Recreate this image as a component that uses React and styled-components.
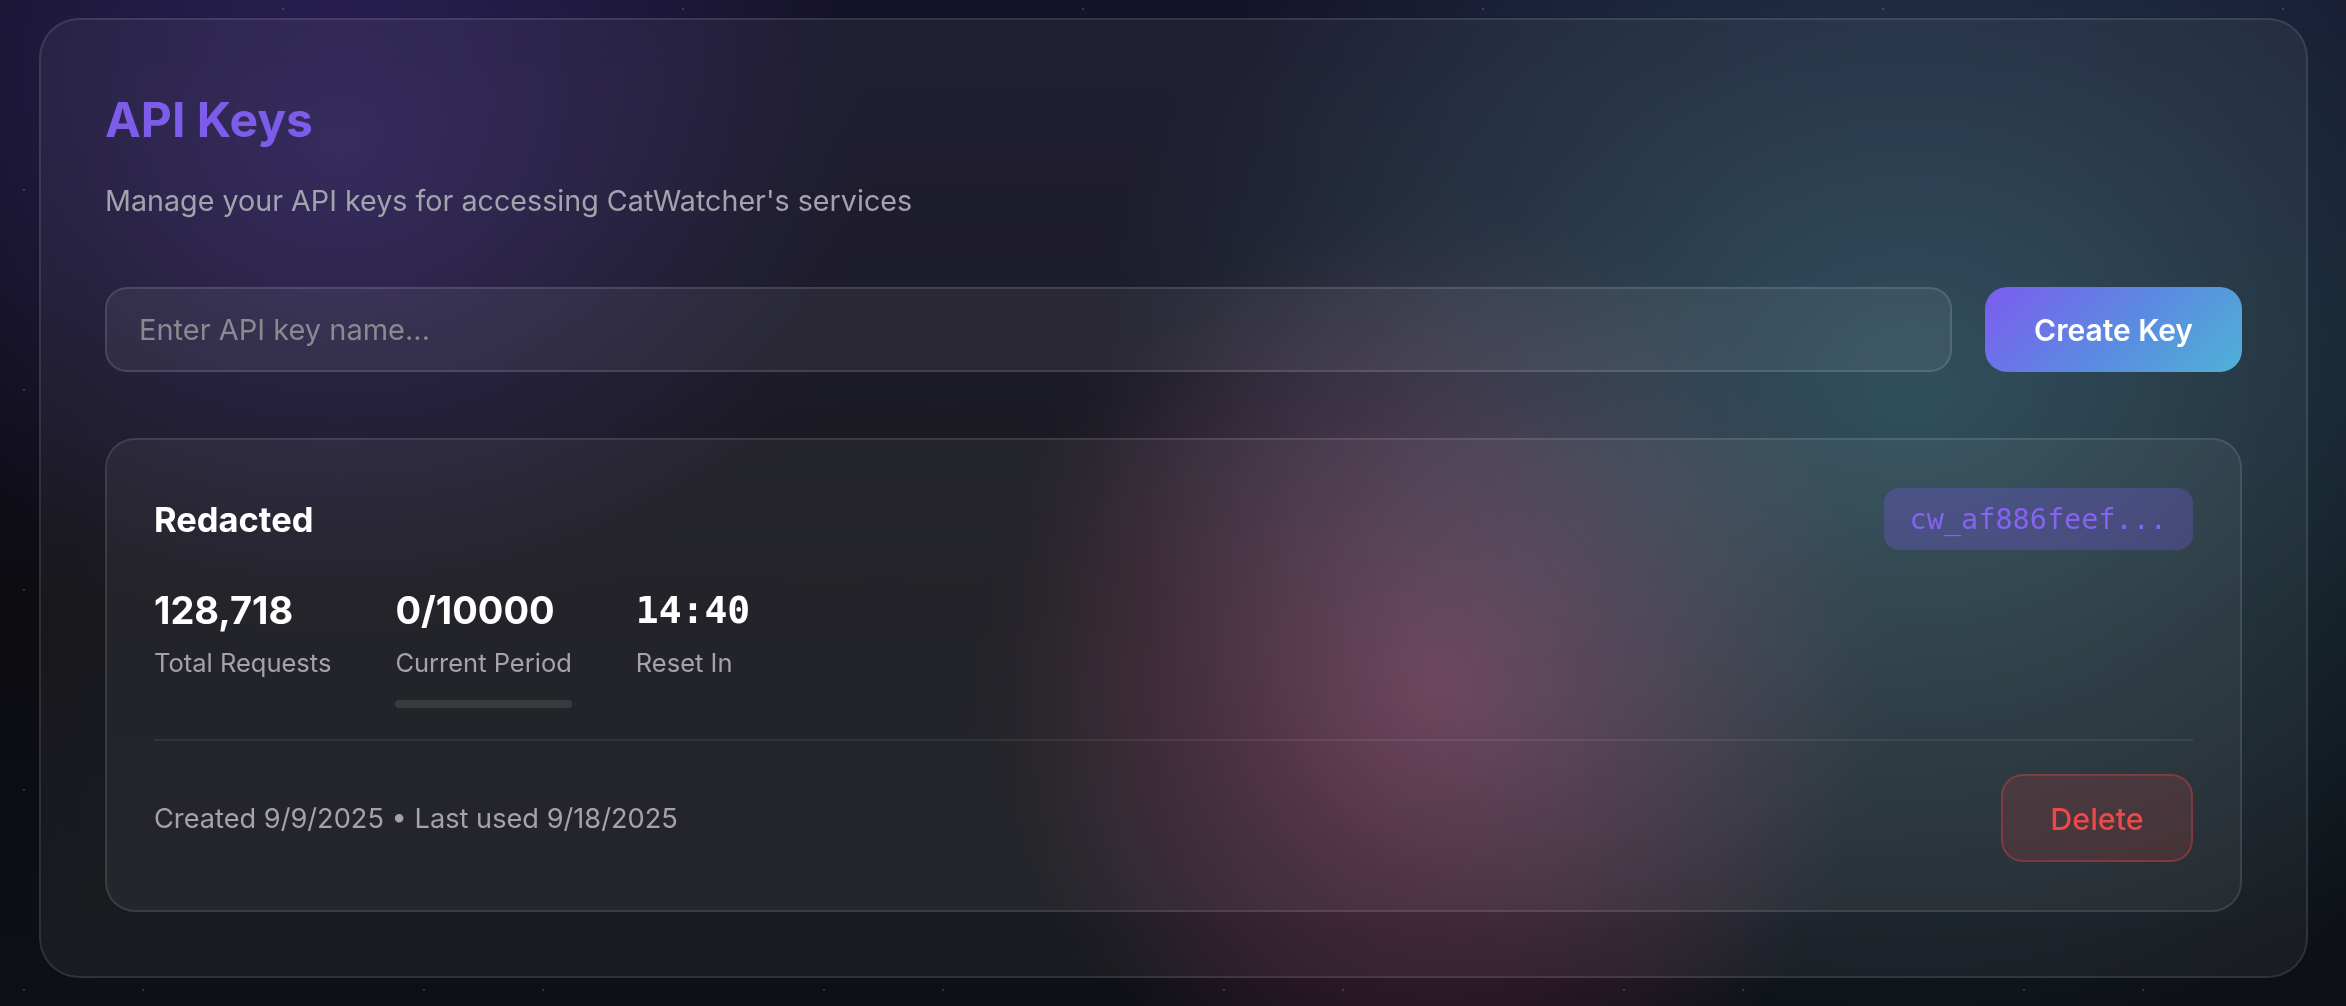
import React from "react";
import styled, { createGlobalStyle } from "styled-components";

const GlobalStyle = createGlobalStyle`
  * { box-sizing: border-box; }
  html, body { margin: 0; padding: 0; }
  body {
    font-family: Inter, "Noto Sans", "Liberation Sans", sans-serif;
    color: #fff;
    min-height: 100vh;
    background-color: #0c0c11;
    background-image:
      radial-gradient(ellipse 520px 480px at 340px 150px, rgba(110, 72, 220, 0.28), transparent 100%),
      radial-gradient(ellipse 820px 660px at 1910px 390px, rgba(70, 150, 170, 0.42), transparent 100%),
      radial-gradient(ellipse 440px 470px at 1440px 680px, rgba(230, 80, 140, 0.4), transparent 100%),
      linear-gradient(180deg, #15132a 0%, #0c0c11 60%, #0d1016 100%);
  }
`;

const Page = styled.div`
  min-height: 100vh;
  padding: 18px 38px 29px 39px;
  background-image:
    radial-gradient(circle 1.6px at 24px 190px, rgba(255, 255, 255, 0.28), transparent 100%),
    radial-gradient(circle 1.6px at 143px 190px, rgba(255, 255, 255, 0.28), transparent 100%),
    radial-gradient(circle 1.6px at 283px 9px, rgba(255, 255, 255, 0.28), transparent 100%);
  background-size: 400px 200px;
`;

const Panel = styled.section`
  border: 2px solid rgba(255, 255, 255, 0.1);
  border-radius: 40px;
  background: rgba(255, 255, 255, 0.05);
  backdrop-filter: blur(24px);
  padding: 64px;
`;

const Title = styled.h1`
  margin: 0;
  font-size: 48px;
  line-height: 72px;
  font-weight: 700;
  color: #7c5ce8;
`;

const Subtitle = styled.p`
  margin: 24px 0 0;
  font-size: 28.7px;
  line-height: 41px;
  color: #a4a3ad;
`;

const CreateRow = styled.div`
  display: flex;
  gap: 33px;
  margin-top: 66px;
`;

const NameInput = styled.input`
  flex: 1;
  height: 85px;
  padding: 0 32px;
  border-radius: 22px;
  border: 2px solid rgba(255, 255, 255, 0.12);
  background: rgba(255, 255, 255, 0.06);
  font-family: inherit;
  font-size: 29px;
  color: #fff;
  outline: none;
  &::placeholder { color: #8a8990; }
`;

const PrimaryButton = styled.button`
  height: 85px;
  padding: 0 49px;
  border: none;
  border-radius: 22px;
  background: linear-gradient(135deg, #7c5cf0 0%, #5a8ce0 55%, #4fb2d6 100%);
  color: #fff;
  font-family: inherit;
  font-size: 30px;
  font-weight: 600;
  cursor: pointer;
`;

const KeyCard = styled.article`
  margin-top: 66px;
  border: 2px solid rgba(255, 255, 255, 0.1);
  border-radius: 30px;
  background: rgba(255, 255, 255, 0.05);
  padding: 48px 47px;
`;

const KeyHeader = styled.div`
  display: flex;
  align-items: center;
  justify-content: space-between;
`;

const KeyName = styled.h3`
  margin: 0;
  font-size: 34.5px;
  font-weight: 700;
  color: #fff;
`;

const KeyBadge = styled.code`
  display: inline-flex;
  align-items: center;
  height: 62px;
  padding: 0 26px;
  border-radius: 15px;
  background: rgba(124, 92, 240, 0.28);
  color: #8663f2;
  font-family: "DejaVu Sans Mono", "Liberation Mono", monospace;
  font-size: 28.5px;
`;

const StatsRow = styled.div`
  display: flex;
  gap: 64px;
  margin-top: 38px;
  padding-bottom: 31px;
`;

const Stat = styled.div`
  display: flex;
  flex-direction: column;
`;

const StatValue = styled.div`
  font-family: ${(p) => (p.$mono ? `"DejaVu Sans Mono", "Liberation Mono", monospace` : "inherit")};
  font-size: 38px;
  line-height: 44px;
  font-weight: 700;
  color: #fff;
`;

const StatLabel = styled.div`
  margin-top: 13px;
  font-size: 25.5px;
  line-height: 36px;
  color: #a4a3ad;
`;

const Track = styled.div`
  margin-top: 19px;
  height: 8px;
  border-radius: 4px;
  background: rgba(255, 255, 255, 0.1);
  overflow: hidden;
`;

const Fill = styled.div`
  height: 100%;
  background: linear-gradient(90deg, #7c5cf0, #4fb2d6);
`;

const Footer = styled.div`
  display: flex;
  align-items: center;
  justify-content: space-between;
  border-top: 2px solid rgba(255, 255, 255, 0.07);
  padding-top: 33px;
`;

const Meta = styled.span`
  font-size: 27.2px;
  color: #a4a3ad;
`;

const DangerButton = styled.button`
  width: 192px;
  height: 88px;
  border-radius: 22px;
  border: 2px solid rgba(239, 68, 68, 0.35);
  background: rgba(239, 68, 68, 0.15);
  color: #ea4a4a;
  font-family: inherit;
  font-size: 30.5px;
  font-weight: 500;
  cursor: pointer;
`;

const stats = [
  { value: "128,718", label: "Total Requests" },
  { value: "0/10000", label: "Current Period", progress: 0 },
  { value: "14:40", label: "Reset In", mono: true },
];

export default function App() {
  return (
    <>
      <GlobalStyle />
      <Page>
        <Panel>
          <Title>API Keys</Title>
          <Subtitle>Manage your API keys for accessing CatWatcher's services</Subtitle>
          <CreateRow>
            <NameInput placeholder="Enter API key name..." />
            <PrimaryButton>Create Key</PrimaryButton>
          </CreateRow>
          <KeyCard>
            <KeyHeader>
              <KeyName>Redacted</KeyName>
              <KeyBadge>cw_af886feef...</KeyBadge>
            </KeyHeader>
            <StatsRow>
              {stats.map((s) => (
                <Stat key={s.label}>
                  <StatValue $mono={s.mono}>{s.value}</StatValue>
                  <StatLabel>{s.label}</StatLabel>
                  {s.progress !== undefined && (
                    <Track>
                      <Fill style={{ width: `${s.progress}%` }} />
                    </Track>
                  )}
                </Stat>
              ))}
            </StatsRow>
            <Footer>
              <Meta>Created 9/9/2025 • Last used 9/18/2025</Meta>
              <DangerButton>Delete</DangerButton>
            </Footer>
          </KeyCard>
        </Panel>
      </Page>
    </>
  );
}
